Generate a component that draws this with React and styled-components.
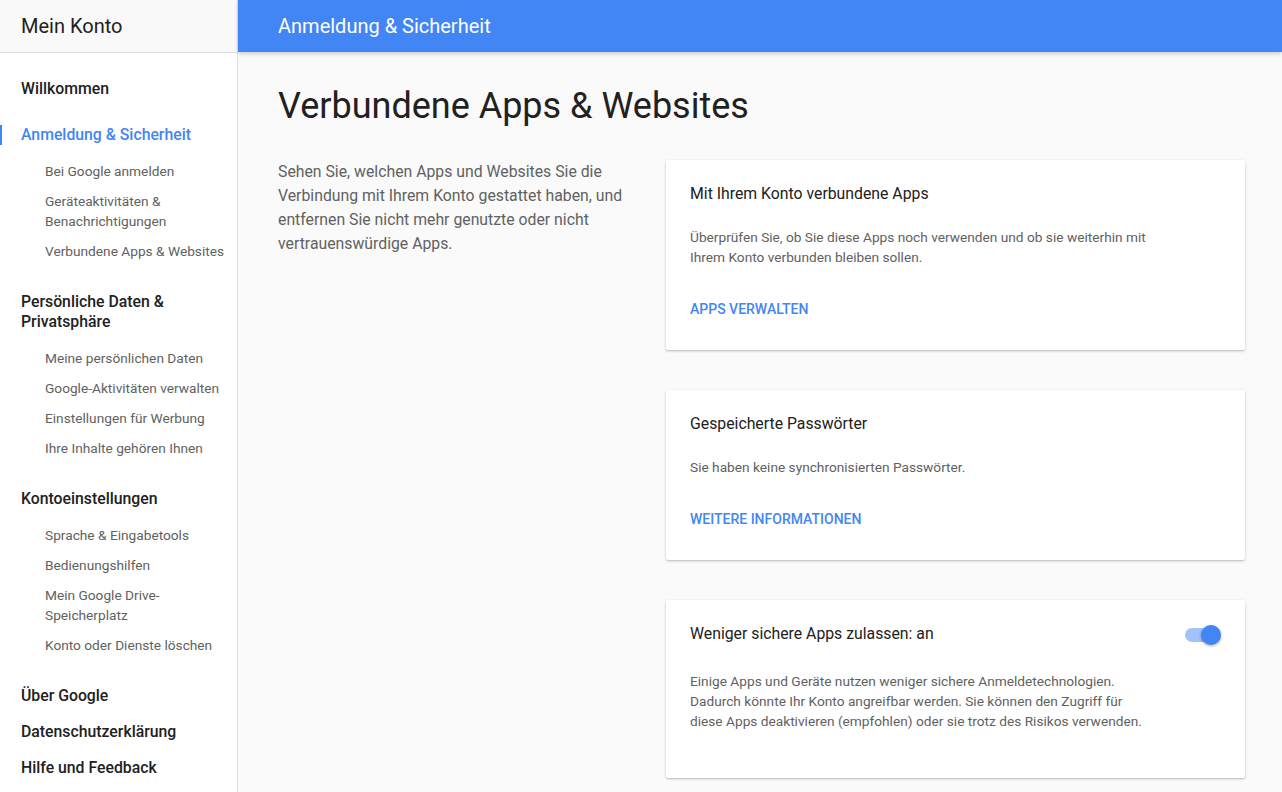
import React from "react";
import styled, { createGlobalStyle } from "styled-components";

const Global = createGlobalStyle`
  html, body { margin: 0; padding: 0; }
  body {
    font-family: Roboto, "Noto Sans", "Liberation Sans", Arial, sans-serif;
    background: #fafafa;
    color: #212121;
    -webkit-font-smoothing: antialiased;
  }
`;

const Page = styled.div`
  display: flex;
  height: 792px;
  overflow: hidden;
`;

const Sidebar = styled.aside`
  width: 238px;
  flex: none;
  background: #fff;
  border-right: 1px solid #e0e0e0;
  box-sizing: border-box;
  display: flex;
  flex-direction: column;
`;

const SideHeader = styled.div`
  height: 52px;
  background: #f9f9f9;
  border-bottom: 1px solid #e0e0e0;
  display: flex;
  align-items: center;
  padding-left: 21px;
  font-size: 20px;
  color: #212121;
`;

const Nav = styled.nav`
  padding-top: 18px;
  display: flex;
  flex-direction: column;
`;

const Heading = styled.a`
  position: relative;
  display: block;
  padding: 8px 16px 8px 21px;
  line-height: 20px;
  font-size: 15.8px;
  font-weight: 500;
  color: ${(p) => (p.$active ? "#4285f4" : "#212121")};
  margin-bottom: ${(p) => p.$gap || 0}px;
  text-decoration: none;
  &::before {
    content: "";
    display: ${(p) => (p.$active ? "block" : "none")};
    position: absolute;
    left: 0;
    top: 8px;
    width: 2px;
    height: 20px;
    background: #4285f4;
  }
`;

const SubList = styled.div`
  display: flex;
  flex-direction: column;
  margin: 3px 0 18px;
`;

const SubItem = styled.a`
  display: block;
  padding: 5px 8px 5px 45px;
  line-height: 20px;
  font-size: 13.7px;
  color: #616161;
  text-decoration: none;
`;

const Main = styled.main`
  flex: 1;
  display: flex;
  flex-direction: column;
  min-width: 0;
`;

const TopBar = styled.header`
  height: 52px;
  flex: none;
  background: #4285f4;
  color: #fff;
  display: flex;
  align-items: center;
  padding-left: 40px;
  font-size: 20px;
  box-shadow: 0 2px 4px rgba(0, 0, 0, 0.18);
  position: relative;
  z-index: 1;
`;

const Content = styled.div`
  padding: 0 37px 0 40px;
`;

const Title = styled.h1`
  margin: 0;
  padding-top: 33px;
  font-size: 36px;
  line-height: 42px;
  font-weight: 400;
  color: #212121;
`;

const Columns = styled.div`
  display: grid;
  grid-template-columns: 1fr 579px;
  column-gap: 24px;
  margin-top: 33px;
`;

const Intro = styled.p`
  margin: 0;
  font-size: 15.8px;
  line-height: 24px;
  color: #616161;
`;

const Cards = styled.div`
  display: flex;
  flex-direction: column;
  gap: 40px;
`;

const Card = styled.section`
  background: #fff;
  border-radius: 2px;
  box-shadow: 0 1px 3px rgba(0, 0, 0, 0.2), 0 1px 1px rgba(0, 0, 0, 0.08);
  padding: 24px 24px 31px;
`;

const CardHead = styled.div`
  display: flex;
  align-items: center;
  justify-content: space-between;
  height: 20px;
`;

const CardTitle = styled.h2`
  margin: 0;
  font-size: 15.8px;
  line-height: 20px;
  font-weight: 400;
  color: #212121;
`;

const CardText = styled.p`
  margin: ${(p) => p.$top || 23}px 0 ${(p) => p.$bottom || 0}px;
  max-width: 462px;
  font-size: 13.7px;
  line-height: 20px;
  color: #616161;
`;

const CardLink = styled.a`
  display: block;
  margin-top: 32px;
  font-size: 14px;
  line-height: 20px;
  font-weight: 500;
  color: #4285f4;
  text-transform: uppercase;
  text-decoration: none;
`;

const Switch = styled.div`
  position: relative;
  width: 36px;
  height: 20px;
  margin-top: 2px;
  display: flex;
  align-items: center;
`;

const Track = styled.div`
  width: 34px;
  height: 14px;
  border-radius: 7px;
  background: #a1c2fa;
`;

const Knob = styled.div`
  position: absolute;
  right: 0;
  top: 0;
  width: 20px;
  height: 20px;
  border-radius: 50%;
  background: #4285f4;
  box-shadow: 0 1px 3px rgba(0, 0, 0, 0.35);
`;

const sections = [
  { title: "Willkommen", gap: 10 },
  {
    title: "Anmeldung & Sicherheit",
    active: true,
    items: [
      "Bei Google anmelden",
      "Geräteaktivitäten & Benachrichtigungen",
      "Verbundene Apps & Websites",
    ],
  },
  {
    title: "Persönliche Daten & Privatsphäre",
    items: [
      "Meine persönlichen Daten",
      "Google-Aktivitäten verwalten",
      "Einstellungen für Werbung",
      "Ihre Inhalte gehören Ihnen",
    ],
  },
  {
    title: "Kontoeinstellungen",
    items: [
      "Sprache & Eingabetools",
      "Bedienungshilfen",
      "Mein Google Drive-Speicherplatz",
      "Konto oder Dienste löschen",
    ],
  },
  { title: "Über Google" },
  { title: "Datenschutzerklärung" },
  { title: "Hilfe und Feedback" },
];

export default function App() {
  return (
    <>
      <Global />
      <Page>
        <Sidebar>
          <SideHeader>Mein Konto</SideHeader>
          <Nav>
            {sections.map((s) => (
              <React.Fragment key={s.title}>
                <Heading $active={s.active} $gap={s.gap}>
                  {s.title}
                </Heading>
                {s.items && (
                  <SubList>
                    {s.items.map((i) => (
                      <SubItem key={i}>{i}</SubItem>
                    ))}
                  </SubList>
                )}
              </React.Fragment>
            ))}
          </Nav>
        </Sidebar>
        <Main>
          <TopBar>Anmeldung &amp; Sicherheit</TopBar>
          <Content>
            <Title>Verbundene Apps &amp; Websites</Title>
            <Columns>
              <Intro>
                Sehen Sie, welchen Apps und Websites Sie die Verbindung mit
                Ihrem Konto gestattet haben, und entfernen Sie nicht mehr
                genutzte oder nicht vertrauenswürdige Apps.
              </Intro>
              <Cards>
                <Card>
                  <CardHead>
                    <CardTitle>Mit Ihrem Konto verbundene Apps</CardTitle>
                  </CardHead>
                  <CardText>
                    Überprüfen Sie, ob Sie diese Apps noch verwenden und ob sie
                    weiterhin mit Ihrem Konto verbunden bleiben sollen.
                  </CardText>
                  <CardLink>Apps verwalten</CardLink>
                </Card>
                <Card>
                  <CardHead>
                    <CardTitle>Gespeicherte Passwörter</CardTitle>
                  </CardHead>
                  <CardText>
                    Sie haben keine synchronisierten Passwörter.
                  </CardText>
                  <CardLink>Weitere Informationen</CardLink>
                </Card>
                <Card>
                  <CardHead>
                    <CardTitle>Weniger sichere Apps zulassen: an</CardTitle>
                    <Switch>
                      <Track />
                      <Knob />
                    </Switch>
                  </CardHead>
                  <CardText $top={27} $bottom={16}>
                    Einige Apps und Geräte nutzen weniger sichere
                    Anmeldetechnologien. Dadurch könnte Ihr Konto angreifbar
                    werden. Sie können den Zugriff für diese Apps deaktivieren
                    (empfohlen) oder sie trotz des Risikos verwenden.
                  </CardText>
                </Card>
              </Cards>
            </Columns>
          </Content>
        </Main>
      </Page>
    </>
  );
}
